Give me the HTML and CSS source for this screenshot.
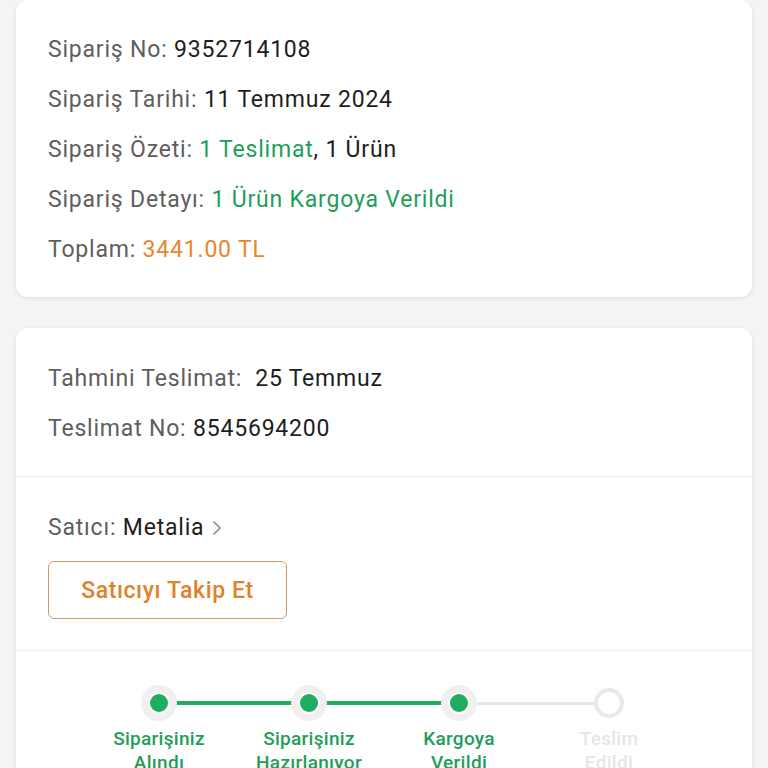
FILE: index.html
```html
<!DOCTYPE html>
<html lang="tr">
<head>
<meta charset="utf-8">
<link rel="stylesheet" href="styles.css">
</head>
<body>
<div class="page">
  <section class="card card-order">
    <div class="row"><span class="lbl">Sipariş No:</span> <span class="val">9352714108</span></div>
    <div class="row"><span class="lbl">Sipariş Tarihi:</span> <span class="val">11 Temmuz 2024</span></div>
    <div class="row"><span class="lbl">Sipariş Özeti:</span> <span class="green">1 Teslimat</span><span class="val">, 1 Ürün</span></div>
    <div class="row"><span class="lbl">Sipariş Detayı:</span> <span class="green">1 Ürün Kargoya Verildi</span></div>
    <div class="row"><span class="lbl">Toplam:</span> <span class="orange">3441.00 TL</span></div>
  </section>

  <section class="card card-delivery">
    <div class="sec sec-info">
      <div class="row"><span class="lbl">Tahmini Teslimat:</span>&nbsp; <span class="val">25 Temmuz</span></div>
      <div class="row"><span class="lbl">Teslimat No:</span> <span class="val">8545694200</span></div>
    </div>
    <div class="sec sec-seller">
      <div class="row"><span class="lbl">Satıcı:</span> <span class="val">Metalia</span><svg class="chev" width="10" height="16" viewBox="0 0 10 16"><path d="M2 2 L8 8 L2 14" fill="none" stroke="#8a8a8a" stroke-width="1.6" stroke-linecap="round" stroke-linejoin="round"/></svg></div>
      <button class="follow">Satıcıyı Takip Et</button>
    </div>
    <div class="sec sec-steps">
      <div class="steps">
        <div class="step done">
          <div class="track"><span class="line right"></span><span class="dot"></span></div>
          <div class="slabel">Siparişiniz<br>Alındı</div>
        </div>
        <div class="step done">
          <div class="track"><span class="line left"></span><span class="line right"></span><span class="dot"></span></div>
          <div class="slabel">Siparişiniz<br>Hazırlanıyor</div>
        </div>
        <div class="step done current">
          <div class="track"><span class="line left"></span><span class="line right gray"></span><span class="dot"></span></div>
          <div class="slabel">Kargoya<br>Verildi</div>
        </div>
        <div class="step todo">
          <div class="track"><span class="line left gray"></span><span class="dot"></span></div>
          <div class="slabel">Teslim<br>Edildi</div>
        </div>
      </div>
    </div>
  </section>
</div>
</body>
</html>
```

FILE: styles.css
```css
* { box-sizing: border-box; }
html, body { margin: 0; padding: 0; }
body {
  background: #f4f4f4;
  font-family: Roboto, "Liberation Sans", Arial, sans-serif;
  font-size: 23px;
  letter-spacing: 0.8px;
  color: #222;
  overflow: hidden;
  height: 768px;
}
.page {
  padding: 0 16px;
  display: flex;
  flex-direction: column;
  gap: 31px;
}
.card {
  background: #fff;
  border-radius: 12px;
  box-shadow: 0 1px 4px rgba(0,0,0,0.10);
}
.card-order {
  padding: 25px 32px 22px;
}
.row {
  height: 50px;
  line-height: 50px;
  white-space: nowrap;
}
.lbl { color: #5e5e5e; }
.val { color: #1e1e1e; }
.green { color: #1f9e5a; }
.orange { color: #e8862f; }
.sec { border-top: 1px solid #ececec; }
.sec:first-child { border-top: none; }
.sec-info { padding: 26px 32px 22px; }
.sec-seller { padding: 26px 32px 31px; }
.chev { margin-left: 8px; vertical-align: -1px; }
.follow {
  display: block;
  margin-top: 8px;
  width: 239px;
  height: 58px;
  border: 1.5px solid #d49a63;
  border-radius: 6px;
  background: #fff;
  color: #e0812b;
  font-family: Roboto, "Liberation Sans", Arial, sans-serif;
  font-size: 23px;
  letter-spacing: 0.6px;
  font-weight: 500;
  padding: 0;
}
.sec-steps { padding: 34px 0 0; height: 140px; }
.steps {
  display: flex;
  justify-content: center;
}
.step {
  width: 150px;
  display: flex;
  flex-direction: column;
  align-items: center;
}
.track {
  position: relative;
  width: 150px;
  height: 36px;
  display: flex;
  justify-content: center;
  align-items: center;
}
.line {
  position: absolute;
  top: 16px;
  height: 4px;
  width: 75px;
  background: #1fae5e;
}
.line.left { left: 0; }
.line.right { right: 0; }
.line.gray { background: #e6e6e6; height: 3px; top: 16.5px; }
.dot {
  position: relative;
  width: 36px;
  height: 36px;
  border-radius: 50%;
  background: #fff;
  border: 7px solid #f0f0f0;
  display: flex;
  align-items: center;
  justify-content: center;
}
.done .dot::after {
  content: "";
  width: 18px;
  height: 18px;
  border-radius: 50%;
  background: #1fae5e;
}
.todo .dot {
  width: 30px;
  height: 30px;
  border: 4px solid #e9e9e9;
}
.slabel {
  margin-top: 6px;
  text-align: center;
  font-size: 19px;
  letter-spacing: 0.3px;
  line-height: 24px;
  color: #1f9e5a;
  font-weight: 500;
}
.todo .slabel { color: #e6e6e6; }
```
